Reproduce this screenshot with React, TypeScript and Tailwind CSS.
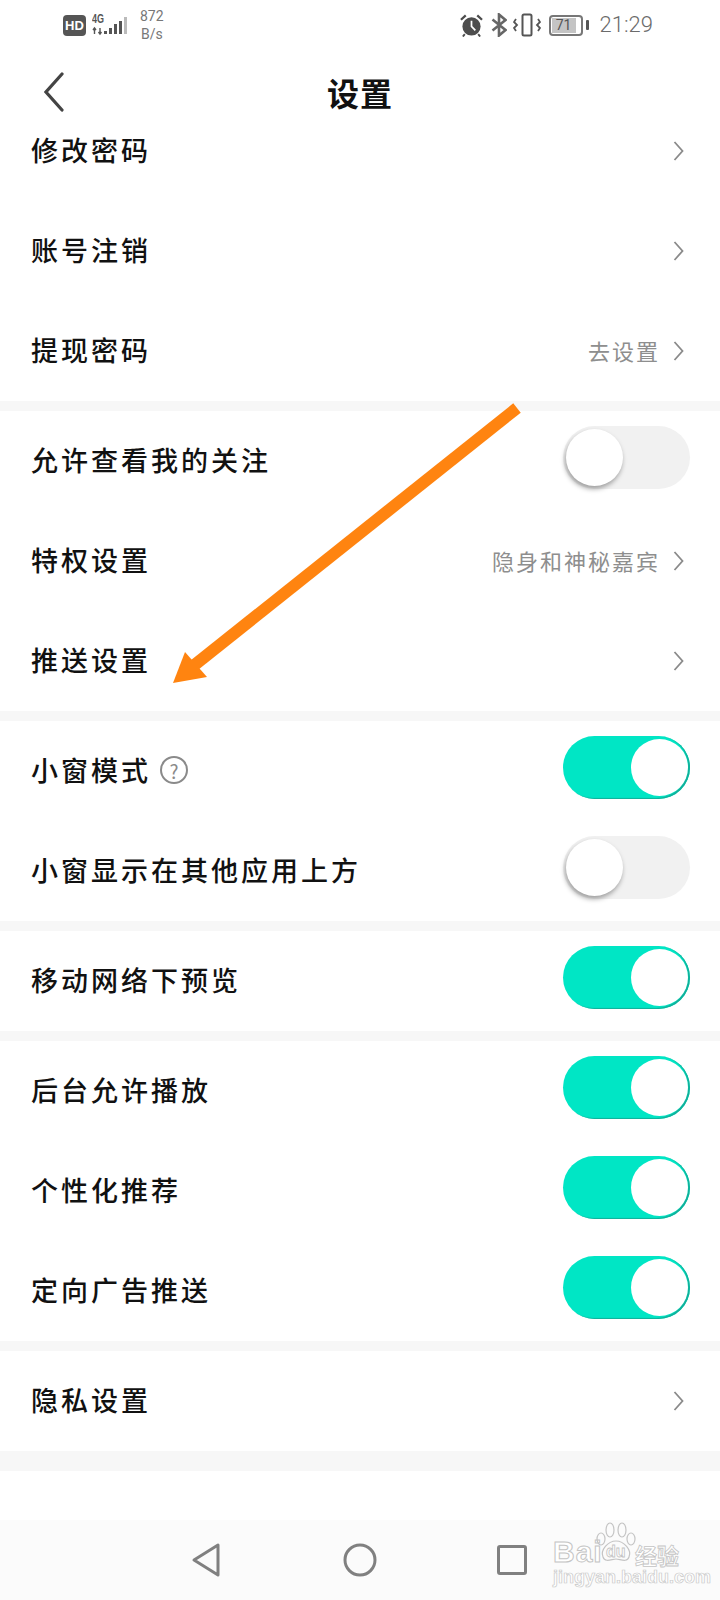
import type { ReactNode } from "react";

const font = { fontFamily: '"Noto Sans CJK SC", sans-serif' };
const latin = { fontFamily: '"Liberation Sans", sans-serif' };
const roboto = { fontFamily: '"Roboto", sans-serif' };

function Chevron() {
  return (
    <svg width="11" height="20" viewBox="0 0 11 20" fill="none" stroke="#8a8a8a" strokeWidth="1.8" className="shrink-0">
      <path d="M1.5 1 L9.5 10 L1.5 19" />
    </svg>
  );
}

function Toggle({ on }: { on: boolean }) {
  if (on) {
    return (
      <div className="mb-2 flex h-[63px] w-[127px] shrink-0 items-center justify-end rounded-full bg-[#00e6c5] pr-[2px] shadow-[inset_-2px_-1px_1px_#10b09a]">
        <div className="h-[57px] w-[57px] rounded-full bg-white" />
      </div>
    );
  }
  return (
    <div className="mb-2 flex h-[63px] w-[127px] shrink-0 items-center rounded-full bg-[#f1f1f1] pl-[3px]">
      <div className="h-[57px] w-[57px] rounded-full bg-white shadow-[-1px_3px_5px_rgba(0,0,0,0.35)]" />
    </div>
  );
}

function Row({ label, children }: { label: ReactNode; children?: ReactNode }) {
  return (
    <div className="flex h-[100px] items-center justify-between bg-white pl-[31px] pr-[30px]">
      <div className="flex items-center pb-[2px] text-[27px] font-medium tracking-[3px] text-[#111]">{label}</div>
      {children}
    </div>
  );
}

function LinkValue({ text }: { text?: string }) {
  return (
    <div className="flex items-center pr-[6px]">
      {text && <span className="mr-[13px] pb-[2px] text-[22px] tracking-[2px] text-[#8e8e8e]">{text}</span>}
      <Chevron />
    </div>
  );
}

function Gap({ h = "h-[10px]" }: { h?: string }) {
  return <div className={`${h} bg-[#f7f7f7]`} />;
}

function StatusBar() {
  return (
    <div className="flex h-[50px] items-center justify-between pl-[63px] pr-[67px] text-[#666]">
      <div className="flex items-center">
        <div className="flex h-[21px] w-[23px] items-center justify-center rounded-[4px] bg-[#555] text-[13px] font-bold leading-none text-white" style={latin}>
          HD
        </div>
        <svg width="36" height="24" viewBox="0 0 36 24" className="ml-[6px]" fill="#555">
          <text x="0" y="9.5" fontSize="12" fontWeight="700" fontFamily="Liberation Sans" textLength="12" lengthAdjust="spacingAndGlyphs">4G</text>
          <path d="M2.5 21 V15 M1 17 L2.5 15 L4 17 M8 15 V21 M6.5 19 L8 21 L9.5 19" stroke="#555" strokeWidth="1.4" fill="none" />
          <rect x="12" y="18" width="3" height="3" />
          <rect x="17" y="15" width="3" height="6" />
          <rect x="22" y="11" width="3" height="10" />
          <rect x="27" y="8" width="3" height="13" />
          <rect x="32" y="4" width="3" height="17" fill="#bbb" />
        </svg>
        <div className="ml-[12px] flex flex-col items-center text-[14px] leading-[18px] text-[#777]" style={roboto}>
          <span>872</span>
          <span>B/s</span>
        </div>
      </div>
      <div className="flex items-center">
        <svg width="23" height="23" viewBox="0 0 24 24" fill="#4d4d4d">
          <circle cx="12" cy="13" r="9.5" />
          <path d="M12 7 V13 L16 17" stroke="#fff" strokeWidth="1.8" fill="none" />
          <path d="M1 6 L6 1.5 M23 6 L18 1.5" stroke="#4d4d4d" strokeWidth="2.4" />
          <path d="M5 21 L3 23.5 M19 21 L21 23.5" stroke="#4d4d4d" strokeWidth="2" />
        </svg>
        <svg width="16" height="24" viewBox="0 0 16 24" fill="none" stroke="#666" strokeWidth="2.6" className="ml-[8px]">
          <path d="M1.5 6.5 L14.5 17 L8 22.5 V1.5 L14.5 7 L1.5 17.5" />
        </svg>
        <svg width="28" height="24" viewBox="0 0 28 24" fill="none" stroke="#555" className="ml-[6px]">
          <rect x="9.5" y="1.5" width="9" height="21" rx="1.5" strokeWidth="2" />
          <path d="M3 6 L1 9 L4 12 L1 15 L3 18" strokeWidth="1.8" />
          <path d="M25 6 L27 9 L24 12 L27 15 L25 18" strokeWidth="1.8" />
        </svg>
        <div className="ml-[8px] flex items-center">
          <div className="flex h-[21px] w-[34px] items-center rounded-[4px] border-2 border-[#777] p-[1px]">
            <div className="flex h-full w-[24px] items-center justify-center bg-[#c4c4c4] text-[14px] leading-none text-[#555]" style={roboto}>
              71
            </div>
          </div>
          <div className="ml-[3px] h-[10px] w-[3px] rounded-[1px] bg-[#555]" />
        </div>
        <span className="ml-[11px] text-[22px] font-light leading-none text-[#6b6b6b]" style={roboto}>
          21:29
        </span>
      </div>
    </div>
  );
}

function Header() {
  return (
    <div className="relative z-10 grid h-[51px] grid-cols-[1fr_auto_1fr] items-center px-[44px] pt-[22px]">
      <div className="flex h-[40px] items-center">
        <svg width="20" height="40" viewBox="0 0 20 40" fill="none" stroke="#444" strokeWidth="3.2" strokeLinecap="round">
          <path d="M18 2 L2 20 L18 38" />
        </svg>
      </div>
      <h1 className="text-[32px] font-bold leading-[40px] tracking-[1px] text-[#111]">设置</h1>
      <div />
    </div>
  );
}

function NavBar() {
  return (
    <div className="relative flex h-[80px] items-center bg-[#fbfbfb] pb-[1px]">
      <svg width="30" height="36" viewBox="0 0 30 36" fill="none" stroke="#808080" strokeWidth="3" strokeLinejoin="round" className="ml-[191px]">
        <path d="M27 3 V33 L3 18 Z" />
      </svg>
      <svg width="34" height="34" viewBox="0 0 34 34" fill="none" stroke="#808080" strokeWidth="3" className="ml-[122px]">
        <circle cx="17" cy="17" r="15" />
      </svg>
      <div className="ml-[120px] h-[30px] w-[30px] rounded-[3px] border-[3px] border-[#808080]" />
      <div className="absolute left-[553px] top-[2px] h-[66px] w-[128px] select-none">
        <span className="absolute left-0 top-[15px] text-[30px] font-bold leading-none tracking-[1px] text-white [-webkit-text-stroke:1px_#c4c4c4]" style={latin}>
          Bai
        </span>
        <svg width="44" height="44" viewBox="0 0 44 44" fill="none" stroke="#c4c4c4" strokeWidth="1.2" className="absolute left-[41px] top-0">
          <ellipse cx="7" cy="17" rx="4" ry="6" />
          <ellipse cx="16" cy="8" rx="4" ry="7" />
          <ellipse cx="28" cy="8" rx="4" ry="7" />
          <ellipse cx="37" cy="17" rx="4" ry="6" />
          <path d="M22 19 C30 19 38 28 35 35 C33 41 26 37 22 37 C18 37 11 41 9 35 C6 28 14 19 22 19 Z" />
        </svg>
        <span className="absolute left-[53px] top-[22px] text-[16px] font-bold leading-none text-white [-webkit-text-stroke:0.8px_#c4c4c4]" style={latin}>
          du
        </span>
        <span className="absolute left-[82px] top-[21px] text-[22px] font-bold leading-none text-white [-webkit-text-stroke:0.8px_#c4c4c4]" style={font}>
          经验
        </span>
        <span className="absolute left-0 top-[46px] text-[18px] font-bold leading-none text-white [-webkit-text-stroke:0.7px_#c9c9c9]" style={latin}>
          jingyan.baidu.com
        </span>
      </div>
    </div>
  );
}

function Arrow() {
  return (
    <svg className="pointer-events-none absolute left-0 top-0 z-20" width="720" height="1600" viewBox="0 0 720 1600" fill="none">
      <path d="M517 408 L192 667" stroke="#ff8410" strokeWidth="12" />
      <path d="M173 683 L185 652 L207 677 Z" fill="#ff8410" />
    </svg>
  );
}

export default function App() {
  return (
    <div className="relative flex h-[1600px] w-[720px] flex-col overflow-hidden bg-white" style={font}>
      <StatusBar />
      <Header />
      <Row label="修改密码"><LinkValue /></Row>
      <Row label="账号注销"><LinkValue /></Row>
      <Row label="提现密码"><LinkValue text="去设置" /></Row>
      <Gap />
      <Row label="允许查看我的关注"><Toggle on={false} /></Row>
      <Row label="特权设置"><LinkValue text="隐身和神秘嘉宾" /></Row>
      <Row label="推送设置"><LinkValue /></Row>
      <Gap />
      <Row
        label={
          <>
            小窗模式
            <span className="ml-[9px] flex h-[28px] w-[28px] items-center justify-center rounded-full border-2 border-[#8a8a8a] text-[19px] font-normal leading-none tracking-normal text-[#8a8a8a]">?</span>
          </>
        }
      >
        <Toggle on />
      </Row>
      <Row label="小窗显示在其他应用上方"><Toggle on={false} /></Row>
      <Gap />
      <Row label="移动网络下预览"><Toggle on /></Row>
      <Gap />
      <Row label="后台允许播放"><Toggle on /></Row>
      <Row label="个性化推荐"><Toggle on /></Row>
      <Row label="定向广告推送"><Toggle on /></Row>
      <Gap />
      <Row label="隐私设置"><LinkValue /></Row>
      <Gap h="h-[20px]" />
      <div className="flex-1" />
      <NavBar />
      <Arrow />
    </div>
  );
}
